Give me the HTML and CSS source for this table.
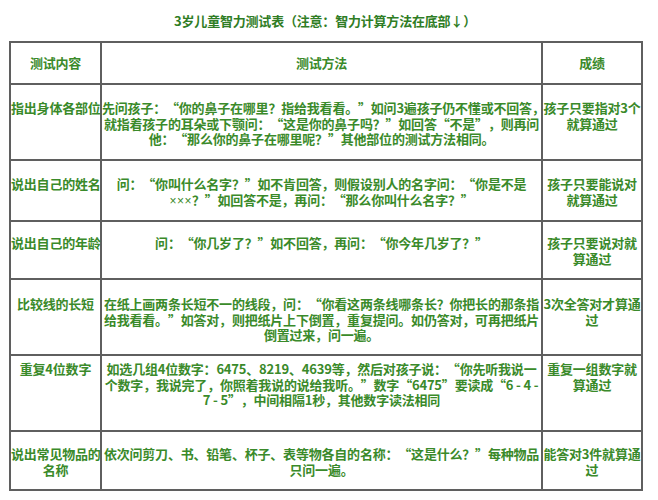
FILE: index.html
```html
<!DOCTYPE html>
<html lang="zh-CN">
<head>
<meta charset="utf-8">
<title>3岁儿童智力测试表</title>
<link rel="stylesheet" href="styles.css">
</head>
<body>
<div class="page">
  <h1 class="title">3岁儿童智力测试表（注意：智力计算方法在底部↓）</h1>
  <table class="sheet">
    <colgroup>
      <col class="c1"><col class="c2"><col class="c3">
    </colgroup>
    <tr class="head">
      <th>测试内容</th>
      <th>测试方法</th>
      <th>成绩</th>
    </tr>
    <tr class="r1">
      <td>指出身体各部位</td>
      <td class="method">先问孩子：“你的鼻子在哪里？指给我看看。”如问3遍孩子仍不懂或不回答，<br>就指着孩子的耳朵或下颚问：“这是你的鼻子吗？”如回答“不是”，则再问<br>他：“那么你的鼻子在哪里呢？”其他部位的测试方法相同。</td>
      <td>孩子只要指对3个<br>就算通过</td>
    </tr>
    <tr class="r2">
      <td>说出自己的姓名</td>
      <td class="method">问：“你叫什么名字？”如不肯回答，则假设别人的名字问：“你是不是<br><span class="latin">×××</span>？”如回答不是，再问：“那么你叫什么名字？”</td>
      <td>孩子只要能说对<br>就算通过</td>
    </tr>
    <tr class="r3">
      <td>说出自己的年龄</td>
      <td class="method">问：“你几岁了？”如不回答，再问：“你今年几岁了？”</td>
      <td>孩子只要说对就<br>算通过</td>
    </tr>
    <tr class="r4">
      <td>比较线的长短</td>
      <td class="method">在纸上画两条长短不一的线段，问：“你看这两条线哪条长？你把长的那条指<br>给我看看。”如答对，则把纸片上下倒置，重复提问。如仍答对，可再把纸片<br>倒置过来，问一遍。</td>
      <td>3次全答对才算通<br>过</td>
    </tr>
    <tr class="r5">
      <td>重复4位数字</td>
      <td class="method">如选几组4位数字：6475、8219、4639等，然后对孩子说：“你先听我说一<br>个数字，我说完了，你照着我说的说给我听。”数字“6475”要读成“6 - 4 -<br>7 - 5”，中间相隔1秒，其他数字读法相同</td>
      <td>重复一组数字就<br>算通过</td>
    </tr>
    <tr class="r6">
      <td>说出常见物品的<br>名称</td>
      <td class="method">依次问剪刀、书、铅笔、杯子、表等物各自的名称：“这是什么？”每种物品<br>只问一遍。</td>
      <td>能答对3件就算通<br>过</td>
    </tr>
  </table>
</div>
</body>
</html>
```

FILE: styles.css
```css
html, body {
  margin: 0;
  padding: 0;
  background: #ffffff;
}

.page {
  width: 632px;
  margin-left: 9px;
  font-family: "Noto Sans CJK SC", "Noto Sans", sans-serif;
  font-weight: 700;
  color: #3a8a2a;
  font-size: 13px;
  text-spacing-trim: space-all;
}

.title {
  margin: 0;
  height: 41px;
  display: flex;
  align-items: center;
  justify-content: center;
  font-size: 13px;
  font-weight: 700;
  color: #2f7d25;
  letter-spacing: -0.2px;
}

.sheet {
  width: 632px;
  table-layout: fixed;
  border-collapse: collapse;
  border: 2px solid #5f5f5f;
}

.c1 { width: 91px; }
.c2 { width: 441px; }
.c3 { width: 100px; }

.sheet th,
.sheet td {
  border: 2px solid #5f5f5f;
  padding: 0;
  text-align: center;
  white-space: nowrap;
  line-height: 15.5px;
  vertical-align: top;
  font-weight: 700;
  letter-spacing: -0.2px;
}

.sheet th {
  vertical-align: middle;
}

.latin {
  font-family: "Liberation Sans", sans-serif;
  font-weight: 400;
  font-size: 12px;
  letter-spacing: 0.5px;
}

.head { height: 42px; }
.r1 { height: 76px; }
.r2 { height: 61px; }
.r3 { height: 58px; }
.r4 { height: 76px; }
.r5 { height: 76px; }
.r6 { height: 59px; }

.r1 td { padding-top: 15px; }
.r2 td { padding-top: 15px; }
.r3 td { padding-top: 13px; }
.r4 td { padding-top: 16px; }
.r5 td { padding-top: 5px; }
.r6 td { padding-top: 14px; }
```
